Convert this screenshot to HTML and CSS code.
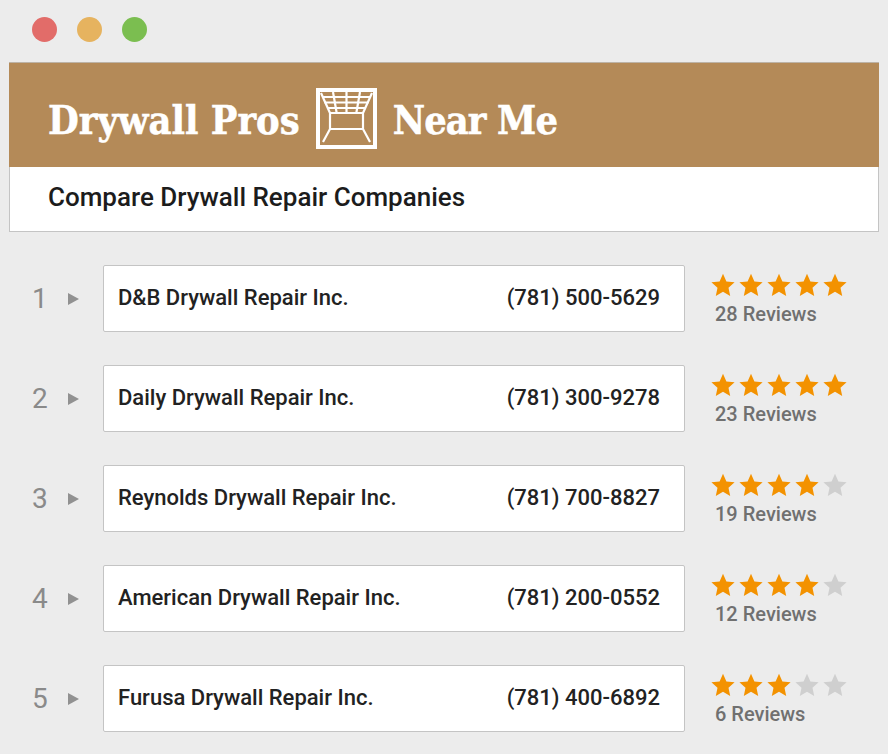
FILE: index.html
```html
<!DOCTYPE html>
<html lang="en">
<head>
<meta charset="utf-8">
<title>Drywall Pros Near Me</title>
<link rel="stylesheet" href="styles.css">
</head>
<body>
<svg class="defs" width="0" height="0" aria-hidden="true"><defs>
<symbol id="star" viewBox="0 0 24 24"><path d="M12 .8l3.400 7.600 8.200.9-6.100 5.500 1.700 8.100L12 18.800l-7.200 4.100 1.700-8.100L.4 9.300l8.200-.9z"/></symbol>
</defs></svg>
<div class="lights"><span class="light red"></span><span class="light amber"></span><span class="light green"></span></div>
<section class="card">
  <header class="banner">
    <span class="brand">Drywall Pros</span>
    <svg class="logo" viewBox="0 0 61 61" aria-hidden="true">
      <rect x="2" y="2" width="57" height="57" fill="none" stroke="#fff" stroke-width="4"/>
      <g fill="none" stroke="#fff" stroke-width="2.200">
        <path d="M5 5L14 25V41M56 5L47 25V41M14 25H47M14 41H47M14 41L7 54M47 41L54 54"/>
        <path d="M6 9H55M8.500 14.500H52.500M11 20H50"/>
        <path d="M17 4L20.700 25M30.500 4V25M44 4L40.300 25"/>
      </g>
    </svg>
    <span class="brand tight">Near Me</span>
  </header>
  <div class="subhead">Compare Drywall Repair Companies</div>
</section>
<main class="list">
  <div class="row">
    <span class="rank">1</span><span class="arrow"></span>
    <div class="box"><span>D&amp;B Drywall Repair Inc.</span><span>(781) 500-5629</span></div>
    <div class="rating"><div class="stars"><svg class="star on"><use href="#star"/></svg><svg class="star on"><use href="#star"/></svg><svg class="star on"><use href="#star"/></svg><svg class="star on"><use href="#star"/></svg><svg class="star on"><use href="#star"/></svg></div><div class="count">28 Reviews</div></div>
  </div>
  <div class="row">
    <span class="rank">2</span><span class="arrow"></span>
    <div class="box"><span>Daily Drywall Repair Inc.</span><span>(781) 300-9278</span></div>
    <div class="rating"><div class="stars"><svg class="star on"><use href="#star"/></svg><svg class="star on"><use href="#star"/></svg><svg class="star on"><use href="#star"/></svg><svg class="star on"><use href="#star"/></svg><svg class="star on"><use href="#star"/></svg></div><div class="count">23 Reviews</div></div>
  </div>
  <div class="row">
    <span class="rank">3</span><span class="arrow"></span>
    <div class="box"><span>Reynolds Drywall Repair Inc.</span><span>(781) 700-8827</span></div>
    <div class="rating"><div class="stars"><svg class="star on"><use href="#star"/></svg><svg class="star on"><use href="#star"/></svg><svg class="star on"><use href="#star"/></svg><svg class="star on"><use href="#star"/></svg><svg class="star"><use href="#star"/></svg></div><div class="count">19 Reviews</div></div>
  </div>
  <div class="row">
    <span class="rank">4</span><span class="arrow"></span>
    <div class="box"><span>American Drywall Repair Inc.</span><span>(781) 200-0552</span></div>
    <div class="rating"><div class="stars"><svg class="star on"><use href="#star"/></svg><svg class="star on"><use href="#star"/></svg><svg class="star on"><use href="#star"/></svg><svg class="star on"><use href="#star"/></svg><svg class="star"><use href="#star"/></svg></div><div class="count">12 Reviews</div></div>
  </div>
  <div class="row">
    <span class="rank">5</span><span class="arrow"></span>
    <div class="box"><span>Furusa Drywall Repair Inc.</span><span>(781) 400-6892</span></div>
    <div class="rating"><div class="stars"><svg class="star on"><use href="#star"/></svg><svg class="star on"><use href="#star"/></svg><svg class="star on"><use href="#star"/></svg><svg class="star"><use href="#star"/></svg><svg class="star"><use href="#star"/></svg></div><div class="count">6 Reviews</div></div>
  </div>
</main>
</body>
</html>
```

FILE: styles.css
```css
* { box-sizing: border-box; }
html, body { margin: 0; height: 754px; overflow: hidden; }
body {
  background: #ececec;
  font-family: Roboto, "Liberation Sans", sans-serif;
  color: #1c1c1c;
  padding: 17px 9px 0;
}
.defs { display: block; height: 0; }
.lights { display: flex; gap: 20px; padding-left: 23px; height: 45px; }
.light { width: 25px; height: 25px; border-radius: 50%; }
.red { background: #e26c69; }
.amber { background: #e6b35f; }
.green { background: #7bbe50; }
.card { width: 870px; height: 170px; background: #fff; }
.banner {
  height: 105px;
  background: #b48a58;
  border-top: 1px solid #bdb3a6;
  display: flex;
  align-items: center;
  padding: 13px 0 3px 39px;
  color: #fff;
}
.brand {
  font-family: "DejaVu Serif", "Liberation Serif", serif;
  font-stretch: condensed;
  font-weight: 700;
  font-size: 39.400px;
  -webkit-text-stroke: 0.5px #fff;
  white-space: nowrap;
}
.tight { letter-spacing: -0.9px; }
.logo { width: 61px; height: 61px; margin: 0 16px; flex: none; position: relative; top: -2px; }
.subhead {
  height: 65px;
  padding: 0 0 4px 38px;
  display: flex;
  align-items: center;
  font-size: 26px;
  font-weight: 500;
  border: 1px solid #c4c4c4;
  border-top: 0;
}
.list { padding: 33px 0 0; display: flex; flex-direction: column; gap: 33px; }
.row { display: flex; align-items: center; height: 67px; }
.rank { width: 59px; padding-left: 23px; font-size: 28px; font-weight: 400; color: #8a8a8a; }
.arrow {
  width: 0; height: 0;
  border-left: 11px solid #919191;
  border-top: 6.500px solid transparent;
  border-bottom: 6.500px solid transparent;
}
.box {
  width: 582px;
  height: 67px;
  margin-left: 24px;
  background: #fff;
  border: 1px solid #c4c4c4;
  border-radius: 2px;
  display: flex;
  align-items: center;
  justify-content: space-between;
  padding: 0 24px 3px 14px;
  font-size: 22px;
  font-weight: 500;
  color: #222;
}
.rating { margin-left: 26px; margin-top: 3px; }
.stars { display: flex; gap: 4px; height: 24px; }
.star { width: 24px; height: 24px; fill: #cfcfcf; }
.star.on { fill: #f39200; }
.count { margin: 5px 0 0 4px; font-size: 20px; font-weight: 500; color: #707070; line-height: 25px; }
```
